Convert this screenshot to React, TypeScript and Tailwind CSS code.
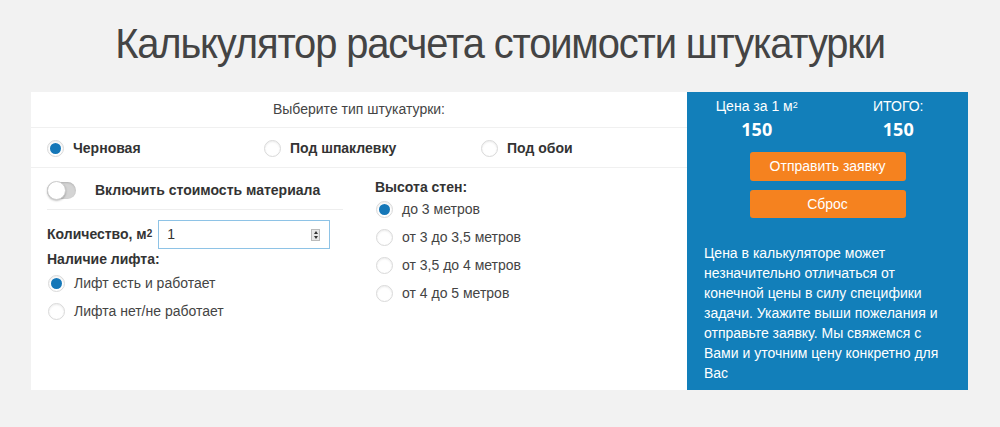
import React from 'react';

function Radio({ checked }: { checked?: boolean }) {
    return (
        <span className="w-[17px] h-[17px] rounded-full border border-[#d9d9d9] bg-white shadow-[inset_0_1px_2px_rgba(0,0,0,0.08)] flex items-center justify-center shrink-0">
            {checked && <span className="w-[11px] h-[11px] rounded-full bg-[#1577b8]" />}
        </span>
    );
}

function Option({ label, checked, bold }: { label: string; checked?: boolean; bold?: boolean }) {
    return (
        <label className="flex items-center gap-[9px] h-[28px]">
            <Radio checked={checked} />
            <span className={bold ? 'font-bold text-[#333]' : 'text-[#444]'}>{label}</span>
        </label>
    );
}

export default function App() {
    return (
        <div className="min-h-[427px] bg-[#f2f2f2] text-[14px] font-['Liberation_Sans',Arial,sans-serif]">
            <h1 className="h-[92px] flex items-center justify-center pb-[6px] text-[42px] text-[#444] tracking-[-1.2px] font-['Liberation_Sans',Arial,sans-serif] [transform:scaleX(0.95)]">
                Калькулятор расчета стоимости штукатурки
            </h1>

            <div className="ml-[31px] w-[937px] h-[298px] flex">
                <div className="w-[656px] bg-white">
                    <div className="h-[36px] flex items-center justify-center border-b border-[#f0f0f0] text-[#444]">
                        Выберите тип штукатурки:
                    </div>
                    <div className="h-[40px] flex items-center pl-[16px] pt-[2px] border-b border-[#f0f0f0]">
                        <div className="w-[217px]"><Option label="Черновая" checked bold /></div>
                        <div className="w-[217px]"><Option label="Под шпаклевку" bold /></div>
                        <div><Option label="Под обои" bold /></div>
                    </div>

                    <div className="flex pl-[16px]">
                        <div className="w-[296px]">
                            <div className="h-[42px] pt-[3px] flex items-center gap-[19px] border-b border-[#eee]">
                                <span className="w-[29px] h-[17px] rounded-full bg-[#d4d4d4] relative shadow-[inset_0_1px_2px_rgba(0,0,0,0.15)]">
                                    <span className="absolute left-0 top-[-1px] w-[19px] h-[19px] rounded-full bg-white border border-[#ccc] shadow-[0_1px_2px_rgba(0,0,0,0.25)]" />
                                </span>
                                <span className="font-bold text-[#333]">Включить стоимость материала</span>
                            </div>
                            <div className="mt-[10px] flex items-center gap-[6px]">
                                <span className="font-bold text-[#333]">
                                    Количество, м<sup className="text-[10px] relative top-[-2px]">2</sup>
                                </span>
                                <div className="w-[172px] h-[29px] border border-[#8ec3e6] flex items-center justify-between pl-[8px] pr-[9px] text-[#333]">
                                    <span>1</span>
                                    <span className="w-[9px] h-[12px] bg-[#e8e8e8] border border-[#bbb] flex flex-col items-center justify-center gap-[2px]">
                                        <span className="w-0 h-0 border-x-[2.5px] border-x-transparent border-b-[3px] border-b-[#333]" />
                                        <span className="w-0 h-0 border-x-[2.5px] border-x-transparent border-t-[3px] border-t-[#333]" />
                                    </span>
                                </div>
                            </div>
                            <div className="mt-[0px] font-bold text-[#333]">Наличие лифта:</div>
                            <div className="pl-[1px] mt-[-1px]">
                                <Option label="Лифт есть и работает" checked />
                                <Option label="Лифта нет/не работает" />
                            </div>
                        </div>

                        <div className="ml-[32px] pt-[9px]">
                            <div className="font-bold text-[#333] mb-[-3px]">Высота стен:</div>
                            <div className="pl-[1px]">
                                <Option label="до 3 метров" checked />
                                <Option label="от 3 до 3,5 метров" />
                                <Option label="от 3,5 до 4 метров" />
                                <Option label="от 4 до 5 метров" />
                            </div>
                        </div>
                    </div>
                </div>

                <div className="w-[281px] bg-[#127fba] text-white">
                    <div className="flex gap-[2px] pt-[4px]">
                        <div className="w-[140px] text-center">
                            <div>Цена за 1 м<sup className="text-[9px] relative top-[-3px]">2</sup></div>
                            <div className="font-['Open_Sans',sans-serif] font-bold text-[18px] leading-[24px]">150</div>
                        </div>
                        <div className="w-[140px] text-center">
                            <div>ИТОГО:</div>
                            <div className="font-['Open_Sans',sans-serif] font-bold text-[18px] leading-[24px]">150</div>
                        </div>
                    </div>
                    <div className="flex flex-col items-center gap-[9px] mt-[11px]">
                        <button className="w-[156px] h-[29px] rounded-[3px] bg-[#f5821f] text-white">Отправить заявку</button>
                        <button className="w-[156px] h-[28px] rounded-[3px] bg-[#f5821f] text-white">Сброс</button>
                    </div>
                    <p className="mt-[25px] px-[17px] leading-[20px] text-[14px]">
                        Цена в калькуляторе может незначительно отличаться от конечной цены в силу специфики задачи. Укажите выши пожелания и отправьте заявку. Мы свяжемся с Вами и уточним цену конкретно для Вас
                    </p>
                </div>
            </div>
        </div>
    );
}
